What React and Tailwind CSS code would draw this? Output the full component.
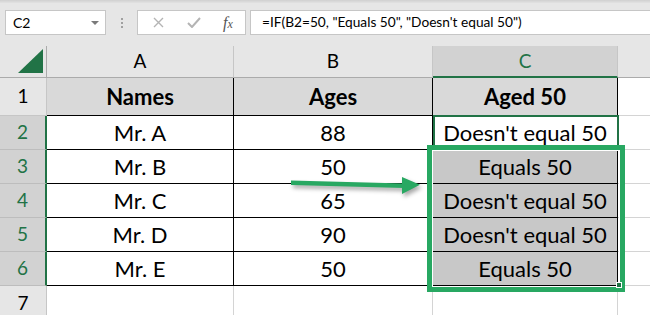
import React from 'react';

const rows = [
  { n: 2, name: 'Mr. A', age: '88', res: "Doesn't equal 50" },
  { n: 3, name: 'Mr. B', age: '50', res: 'Equals 50' },
  { n: 4, name: 'Mr. C', age: '65', res: "Doesn't equal 50" },
  { n: 5, name: 'Mr. D', age: '90', res: "Doesn't equal 50" },
  { n: 6, name: 'Mr. E', age: '50', res: 'Equals 50' },
];

const cell = 'flex items-center justify-center border-r border-b border-black text-[22px] leading-none text-black';

const App = () => {
  return (
    <div className="relative w-[650px] h-[315px] overflow-hidden bg-[#e6e6e6] font-['Lato',sans-serif]">
      {/* top strip */}
      <div className="h-[3px] bg-gradient-to-b from-[#d0d0d0] to-[#e2e2e2]" />

      {/* formula bar */}
      <div className="flex items-stretch pt-[7px] pb-[11px] h-[43px]">
        <div className="ml-[5px] w-[101px] bg-white border border-[#c6c6c6] flex items-center justify-between pl-[7px] pr-[6px]">
          <span className="text-[14px] text-black">C2</span>
          <svg width="8" height="4" viewBox="0 0 8 4"><path d="M0 0h8L4 4z" fill="#7a7a7a" /></svg>
        </div>
        <div className="w-[31px] flex flex-col items-center justify-center gap-[2px]">
          <div className="w-[2px] h-[2px] bg-[#a0a0a0]" />
          <div className="w-[2px] h-[2px] bg-[#a0a0a0]" />
          <div className="w-[2px] h-[2px] bg-[#a0a0a0]" />
        </div>
        <div className="w-[109px] bg-white border border-[#c6c6c6] flex items-center pl-[15px]">
          <svg width="11" height="11" viewBox="0 0 11 11">
            <path d="M1 1L10 10M10 1L1 10" stroke="#b4b4b4" strokeWidth="1.4" />
          </svg>
          <svg className="ml-[23px]" width="14" height="11" viewBox="0 0 14 11">
            <path d="M1 6L5 10L13 1" stroke="#b4b4b4" strokeWidth="2" fill="none" />
          </svg>
          <span className="ml-[22px] font-['Liberation_Serif',serif] italic text-[16px] text-[#555] leading-none">
            f<span className="text-[12px]">x</span>
          </span>
        </div>
        <div className="ml-[4px] flex-1 bg-white border-y border-l border-[#c6c6c6] flex items-center pl-[11px]">
          <span className="text-[13.7px] text-black whitespace-nowrap">=IF(B2=50, "Equals 50", "Doesn't equal 50")</span>
        </div>
      </div>

      {/* grid */}
      <div className="grid grid-cols-[47px_187px_199px_185px_1fr] grid-rows-[32px_38px_34px_34px_34px_34px_34px_1fr] h-[269px]">
        {/* column headers */}
        <div className="flex items-end justify-end pr-[3px] pb-[4px] border-r border-b border-[#ababab]">
          <svg width="25" height="24" viewBox="0 0 25 24"><path d="M25 0V24H0z" fill="#217346" /></svg>
        </div>
        <div className="flex items-center justify-center border-r border-[#c6c6c6] border-b border-b-[#ababab] text-[19px] text-black">A</div>
        <div className="flex items-center justify-center border-r border-[#c6c6c6] border-b border-b-[#ababab] text-[19px] text-black">B</div>
        <div className="flex items-center justify-center bg-[#d2d2d2] border-r border-[#c6c6c6] border-b-2 border-b-[#217346] text-[19px] text-[#217346]">C</div>
        <div className="border-b border-[#ababab]" />

        {/* row 1 */}
        <div className="flex items-center justify-center border-r border-b border-[#c6c6c6] text-[19px] text-black">1</div>
        <div className={`${cell} bg-[#d9d9d9] font-bold`}>Names</div>
        <div className={`${cell} bg-[#d9d9d9] font-bold`}>Ages</div>
        <div className={`${cell} bg-[#d9d9d9] font-bold`}>Aged 50</div>
        <div className="bg-white border-b border-[#d4d4d4]" />

        {rows.map((r) => (
          <React.Fragment key={r.n}>
            <div className="flex items-center justify-center bg-[#d2d2d2] border-r-2 border-r-[#217346] border-b border-b-[#bdbdbd] text-[19px] text-[#217346]">
              {r.n}
            </div>
            <div className={`${cell} bg-white`}>{r.name}</div>
            <div className={`${cell} bg-white`}>{r.age}</div>
            <div className={`${cell} ${r.n === 2 ? 'bg-white' : 'bg-[#c8c8c8]'}`}>{r.res}</div>
            <div className="bg-white border-b border-[#d4d4d4]" />
          </React.Fragment>
        ))}

        {/* row 7 */}
        <div className="flex items-start justify-center pt-[7px] border-r border-[#c6c6c6] text-[19px] leading-none text-black">7</div>
        <div className="bg-white border-r border-[#d4d4d4]" />
        <div className="bg-white border-r border-[#d4d4d4]" />
        <div className="bg-white border-r border-[#d4d4d4]" />
        <div className="bg-white" />
      </div>

      {/* C2 outline */}
      <div className="absolute left-[433px] top-[115px] w-[186px] h-[32px] border-2 border-[#217346]" />

      {/* selection C3:C6 */}
      <div className="absolute left-[427px] top-[145px] w-[198px] h-[147px] border-[5px] border-[#28a862]">
        <div className="w-full h-full border border-white" />
      </div>
      <div className="absolute left-[616px] top-[282px] w-[6px] h-[6px] bg-[#217346] border border-white" />

      {/* arrow */}
      <svg
        className="absolute left-[280px] top-[170px] drop-shadow-[2px_3px_2px_rgba(0,0,0,0.35)]"
        width="145"
        height="30"
        viewBox="0 0 145 30"
      >
        <path d="M11 10.5L124 13.5V18L11 15z" fill="#28a862" />
        <path d="M122 7L140 14.8L122 24z" fill="#28a862" />
      </svg>
    </div>
  );
};

export default App;
